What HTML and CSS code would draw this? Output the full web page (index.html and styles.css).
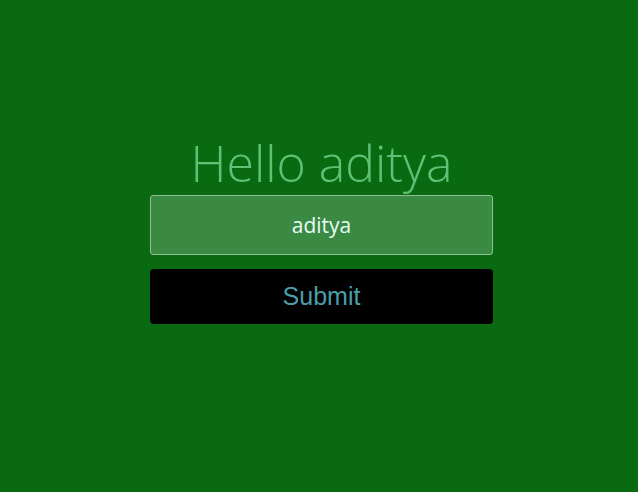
FILE: index.html
```html
<!DOCTYPE html>
<html>
<head>
<meta charset="utf-8">
<link rel="stylesheet" href="styles.css">
</head>
<body>
<main class="page">
  <form class="card">
    <h1 class="title">Hello aditya</h1>
    <input class="name-input" type="text" value="aditya">
    <button class="submit" type="button">Submit</button>
  </form>
</main>
</body>
</html>
```
FILE: styles.css
```css
html, body {
  margin: 0;
  padding: 0;
  background: #0a6a12;
  height: 100%;
}
.page {
  display: flex;
  justify-content: center;
  padding-top: 131px;
  padding-left: 5px;
}
.card {
  width: 343px;
  display: flex;
  flex-direction: column;
  align-items: stretch;
}
.title {
  margin: 0;
  text-align: center;
  font-family: "Open Sans", sans-serif;
  font-weight: 300;
  font-size: 50px;
  line-height: 64px;
  color: #5dc176;
}
.name-input {
  box-sizing: border-box;
  height: 60px;
  margin: 0;
  border: 1px solid #8fbf93;
  border-radius: 3px;
  background: #3a8a44;
  color: #e8fbf5;
  text-align: center;
  font-family: "Open Sans", sans-serif;
  font-size: 21px;
  padding: 0;
  outline: none;
}
.submit {
  box-sizing: border-box;
  margin-top: 14px;
  height: 55px;
  border: none;
  border-radius: 4px;
  background: #000;
  color: #4a9ea8;
  font-family: "Liberation Sans", Arial, sans-serif;
  font-size: 25px;
  cursor: pointer;
}
```
